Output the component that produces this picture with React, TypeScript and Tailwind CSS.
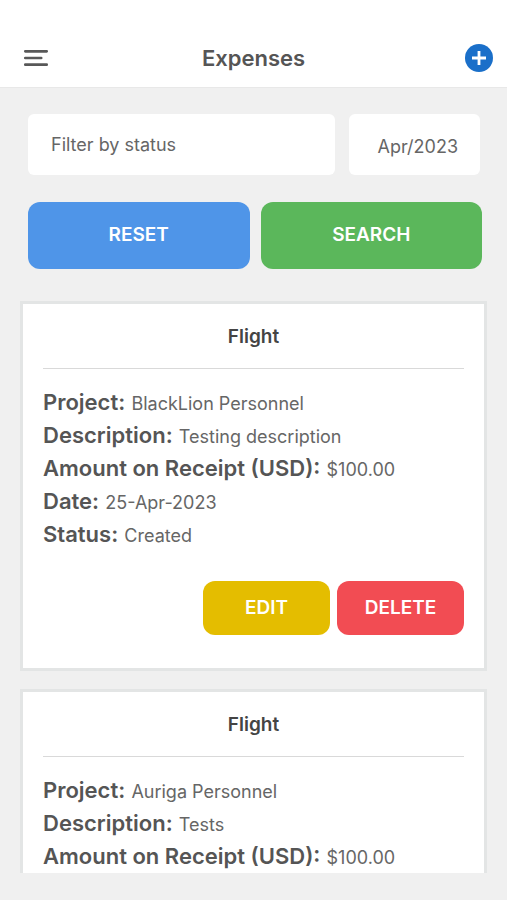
type Expense = {
  id: number
  title: string
  project: string
  description: string
  amount: string
  date: string
  status: string
}

const expenses: Expense[] = [
  {
    id: 1,
    title: 'Flight',
    project: 'BlackLion Personnel',
    description: 'Testing description',
    amount: '$100.00',
    date: '25-Apr-2023',
    status: 'Created',
  },
  {
    id: 2,
    title: 'Flight',
    project: 'Auriga Personnel',
    description: 'Tests',
    amount: '$100.00',
    date: '25-Apr-2023',
    status: 'Created',
  },
]

function MenuIcon() {
  return (
    <svg width="26" height="18" viewBox="0 0 26 18" fill="none" stroke="#585858" strokeWidth="2.7" strokeLinecap="round">
      <path d="M2.3 2.3H23.7M2.3 9H18.2M2.3 15.7H23.7" />
    </svg>
  )
}

function AddIcon() {
  return (
    <svg width="28" height="28" viewBox="0 0 28 28" fill="none">
      <circle cx="14" cy="14" r="14" fill="#1a6fc9" />
      <path d="M14 7V21M7 14H21" stroke="#fff" strokeWidth="2.8" />
    </svg>
  )
}

function Field({ label, value }: { label: string; value: string }) {
  return (
    <div className="text-[22px] leading-[33px]">
      <dt className="inline font-semibold text-[#555555]">{label}:</dt>{' '}
      <dd className="inline text-lg text-[#666666]">{value}</dd>
    </div>
  )
}

function ExpenseCard({ expense }: { expense: Expense }) {
  return (
    <article className="shrink-0 border-3 border-[#e3e5e5] bg-white px-5 pb-[33px]">
      <h2 className="border-b border-[#d9d9d9] pt-0.5 text-center text-[19px] leading-[62px] font-semibold text-[#444444]">
        {expense.title}
      </h2>
      <dl className="pt-[17px]">
        <Field label="Project" value={expense.project} />
        <Field label="Description" value={expense.description} />
        <Field label="Amount on Receipt (USD)" value={expense.amount} />
        <Field label="Date" value={expense.date} />
        <Field label="Status" value={expense.status} />
      </dl>
      {/* Actions */}
      <div className="mt-[30px] flex justify-end gap-[7px] text-[19px] font-semibold text-white">
        <button className="h-[54px] w-[127px] cursor-pointer rounded-xl bg-[#e4bd00]">EDIT</button>
        <button className="h-[54px] w-[127px] cursor-pointer rounded-xl bg-[#f24c53]">DELETE</button>
      </div>
    </article>
  )
}

export default function App() {
  return (
    <div className="flex h-screen flex-col bg-[#f0f0f0] pb-[27px] font-['Inter',sans-serif]">
      {/* Header */}
      <header className="grid shrink-0 grid-cols-[1fr_auto_1fr] items-center border-b border-[#e8e8e8] bg-white px-[14px] pt-[29px]">
        <button aria-label="Open menu" className="cursor-pointer justify-self-start pl-[9px]">
          <MenuIcon />
        </button>
        <h1 className="text-[22px] leading-[58px] font-semibold text-[#555555]">Expenses</h1>
        <button aria-label="Add expense" className="cursor-pointer justify-self-end">
          <AddIcon />
        </button>
      </header>

      {/* Filters */}
      <form className="shrink-0 pt-[26px] pr-[25px] pl-7" onSubmit={(e) => e.preventDefault()}>
        <div className="flex gap-[14px] pr-0.5 text-lg text-[#666666]">
          <select
            aria-label="Filter by status"
            className="h-[61px] min-w-0 flex-1 appearance-none rounded-md bg-white px-[23px]"
          >
            <option>Filter by status</option>
            <option>Created</option>
          </select>
          <input
            aria-label="Month"
            defaultValue="Apr/2023"
            className="h-[61px] w-[131px] rounded-md bg-white pt-1 pr-[22px] text-right"
          />
        </div>
        <div className="mt-[27px] flex gap-[11px] text-[19px] font-semibold text-white">
          <button type="reset" className="h-[67px] flex-1 cursor-pointer rounded-xl bg-[#4f95e8]">
            RESET
          </button>
          <button type="submit" className="h-[67px] flex-1 cursor-pointer rounded-xl bg-[#5bb75b]">
            SEARCH
          </button>
        </div>
      </form>

      {/* Expense list */}
      <main className="mt-8 flex min-h-0 flex-1 flex-col gap-[18px] overflow-hidden px-5">
        {expenses.map((expense) => (
          <ExpenseCard key={expense.id} expense={expense} />
        ))}
      </main>
    </div>
  )
}
